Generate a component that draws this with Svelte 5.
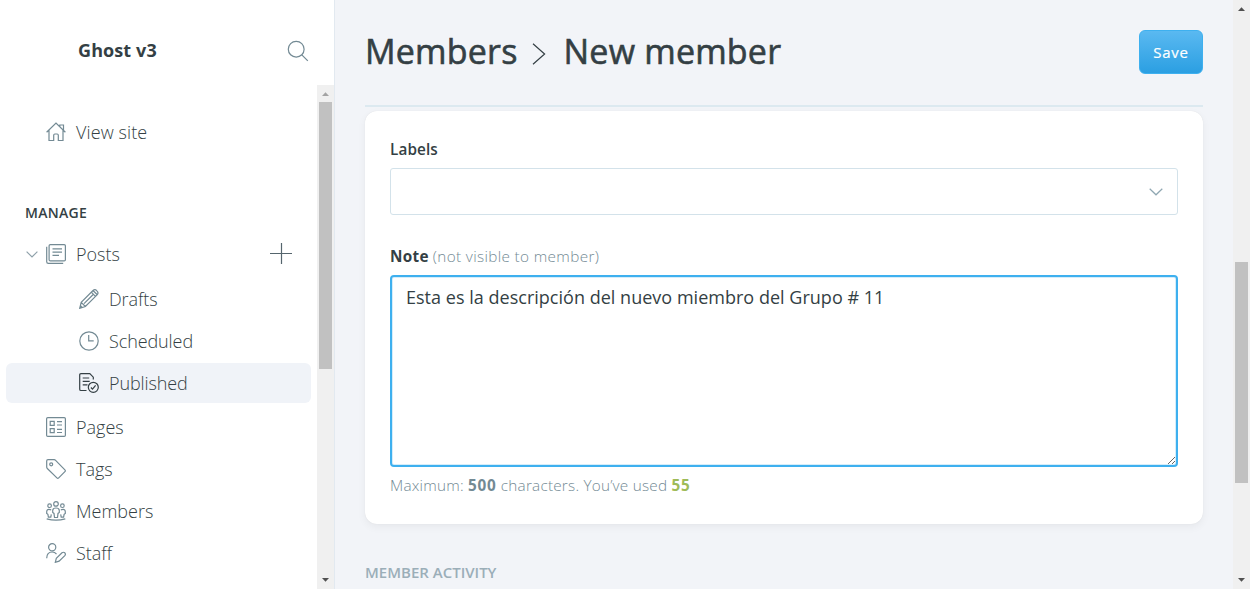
<script>
  const items = [
    { label: 'Posts', icon: 'posts', cls: 'posts', open: true },
    { label: 'Drafts', icon: 'pencil', cls: 'child drafts' },
    { label: 'Scheduled', icon: 'clock', cls: 'child scheduled' },
    { label: 'Published', icon: 'published', cls: 'child published active' },
    { label: 'Pages', icon: 'pages', cls: 'pages' },
    { label: 'Tags', icon: 'tag', cls: 'tags' },
    { label: 'Members', icon: 'members', cls: 'members' },
    { label: 'Staff', icon: 'staff', cls: 'staff' }
  ];
  let note = $state('Esta es la descripción del nuevo miembro del Grupo # 11');
</script>

{#snippet icon(name)}
  <svg class="icon" viewBox="0 0 20 20" width="20" height="20">
    {#if name === 'home'}
      <path d="M.6 10.2 10 1l9.4 9.2M3 8.3V18.5h4.7v-5.2q0-1.3 1.2-1.3h2.2q1.2 0 1.2 1.3v5.2H17V8.3M13.8 4.5V3h3.7v5.2" />
    {:else if name === 'posts'}
      <rect x="3.1" y=".6" width="16.3" height="16.3" rx="1.2" />
      <path d="M.7 2.7v15q0 1.7 1.7 1.7h14.8M6.5 4.8H16M6.5 8.1H16M6.5 11.4H13" />
    {:else if name === 'pencil'}
      <path d="m.7 19.3 1.5-6L14 1.5q2-1.7 3.9.3 2 2 .4 3.9L6.4 17.5zM2.2 13.3l4.2 4.2M12.3 3.2l4.4 4.4M14 1.5l4.3 4.2M5 14.7 14.2 5.5M1.5 16.7l1.6 1.6" />
    {:else if name === 'clock'}
      <circle cx="10" cy="10" r="9.2" /><path d="M9.7 4.1v5.8h5" />
    {:else if name === 'published'}
      <path d="M7.5 17.5H2q-1.3 0-1.3-1.3V2Q.7.7 2 .7h8.8l3.5 3.5v2.3M3.7 5h6.5M3.7 8.4h7M3.7 11.8h4.8" />
      <circle cx="14.3" cy="14.3" r="5" /><path d="m11.9 14.5 1.6 1.6 3.1-3.8" />
    {:else if name === 'pages'}
      <rect x=".6" y=".6" width="18.8" height="18.8" rx="1.2" />
      <path d="M4.2 4.4h4v4h-4zM4.2 11.7h4v4h-4zM11 4.7h5M11 8h5M11 12.3h5M11 15.5h5" />
    {:else if name === 'tag'}
      <path d="M.7 2q0-1.3 1.3-1.3h6.2q.8 0 1.4.6l9.3 9.5q.9.9 0 1.8l-6.2 6.2q-.9.9-1.8 0L1.3 9.5q-.6-.6-.6-1.4z" /><circle cx="5.2" cy="5.3" r="1.5" />
    {:else if name === 'members'}
      <circle cx="10" cy="2.9" r="2.3" /><circle cx="3.6" cy="4.7" r="1.8" /><circle cx="16.4" cy="4.7" r="1.8" />
      <path d="M8.5 16.5 8 12.4l-1.3-1V9.5q0-2.5 3.3-2.5t3.3 2.5v1.9l-1.3 1-.5 4.1zM5.2 8.8Q.7 7.5.7 10.7v1.7l1.2 1 .5 2.7h2.4l.5-2.7M14.8 8.8q4.5-1.3 4.5 1.9v1.7l-1.2 1-.5 2.7h-2.4l-.5-2.7M.7 17.8q9.3 2.7 18.6 0" />
    {:else if name === 'staff'}
      <circle cx="6.2" cy="4.3" r="3.6" />
      <path d="M.7 15.2Q.8 9 6.2 9q2.7 0 4.3 2.1M9.3 19.3l1-3.9 5.7-5.6q1.5-1.1 2.8 0 1.2 1.5 0 2.9l-5.7 5.5z" />
    {/if}
  </svg>
{/snippet}

{#snippet scrollbar(kind)}
  <div class="scrollbar {kind}" aria-hidden="true">
    <svg width="9" height="4" viewBox="0 0 9 4"><path d="M1 4 4.5.2 8 4z" /></svg>
    <div class="track"><div class="thumb"></div></div>
    <svg width="9" height="4" viewBox="0 0 9 4"><path d="M1 0 4.5 3.8 8 0z" /></svg>
  </div>
{/snippet}

<div class="app">
  <aside>
    <header class="brand">
      <strong>Ghost v3</strong>
      <svg class="search" width="22" height="22" viewBox="0 0 22 22"><circle cx="9.2" cy="9.2" r="7.9" /><path d="m14.8 14.8 6 6" /></svg>
    </header>
    <div class="scroller">
      <nav>
        <a class="row view" href="#site">{@render icon('home')}<span>View site</span></a>
        <h2>Manage</h2>
        {#each items as item}
          <a class="row {item.cls}" href="#{item.icon}">
            {#if item.open}<svg class="caret" width="12" height="7" viewBox="0 0 12 7"><path d="m.6.6 5.4 5.3L11.4.6" /></svg>{/if}
            {@render icon(item.icon)}<span>{item.label}</span>
            {#if item.open}<svg class="plus" width="22" height="22" viewBox="0 0 22 22"><path d="M11.5 0v21M0 10.5h22" /></svg>{/if}
          </a>
        {/each}
      </nav>
      {@render scrollbar('side')}
    </div>
  </aside>

  <main>
    <header class="top">
      <h1><span class="crumb">Members</span><svg width="14" height="22" viewBox="0 0 14 22"><path d="m1 .8 11.6 10.2L1 21.2" /></svg><span class="current">New member</span></h1>
      <button>Save</button>
    </header>
    <section class="card">
      <div class="label labels"><b>Labels</b></div>
      <div class="select"><svg width="14" height="8" viewBox="0 0 14 8"><path d="m.7.7 6.3 6.1L13.3.7" /></svg></div>
      <div class="label note"><b>Note</b> <span>(not visible to member)</span></div>
      <textarea bind:value={note} spellcheck="false"></textarea>
      <p>Maximum: <b>500</b> characters. You’ve used <b class="used">{note.length}</b></p>
    </section>
    <h3>Member activity</h3>
  </main>
  {@render scrollbar('page')}
</div>

<style>
  :global(body) { margin: 0; overflow: hidden; }
  * { box-sizing: border-box; }
  .app { display: flex; width: 1250px; height: 589px; overflow: hidden; background: #f2f4f8; color: #343f44; font-family: "Open Sans", "Noto Sans", sans-serif; }
  svg { display: block; flex: none; fill: none; stroke-width: 1.2; }
  aside { width: 335px; flex: none; display: flex; flex-direction: column; background: #fff; border-right: 1px solid #e2e9f0; }
  .brand { height: 85px; flex: none; display: flex; align-items: center; justify-content: space-between; padding: 17px 25px 0 78px; font-size: 18px; letter-spacing: .1px; }
  .brand strong { padding-bottom: 2px; }
  .search { stroke: #738a94; }
  .scroller { display: flex; flex: 1; min-height: 0; }
  nav { flex: 1; overflow: hidden; padding: 27px 6px 0; }
  .row { height: 40px; margin-bottom: 2px; display: flex; align-items: center; padding-left: 40px; color: #343f44; text-decoration: none; font-size: 18px; font-weight: 300; border-radius: 6px; }
  .row span { margin-left: 10px; }
  .view { letter-spacing: .1px; }
  .icon { stroke: #738a94; }
  .child { padding-left: 73px; letter-spacing: -.1px; }
  .active { background: #f0f3f8; }
  .active .icon { stroke: #343f44; }
  .posts { padding-left: 20px; padding-right: 19px; margin-bottom: 5px; }
  .published { margin-bottom: 4px; }
  .caret { margin-right: 8px; stroke: #8fa1aa; }
  .plus { margin-left: auto; stroke: #55656d; }
  h2 { margin: 51px 0 11px 19px; font-size: 14px; line-height: 20px; font-weight: 600; text-transform: uppercase; letter-spacing: .3px; }
  .scrollbar { width: 17px; flex: none; display: flex; flex-direction: column; align-items: center; background: #f0f0f0; padding: 7px 0; }
  .scrollbar svg { fill: #505050; }
  .track { flex: 1; width: 13px; margin: 6px 0; }
  .thumb { background: #c1c1c1; }
  .side .thumb { height: 267px; }
  .side svg:first-child { fill: #a3a3a3; }
  .page .thumb { margin-top: 245px; height: 221px; }
  main { flex: 1; padding: 0 30px; overflow: hidden; }
  .top { height: 107px; display: flex; align-items: flex-start; justify-content: space-between; border-bottom: 2px solid #dce9f0; }
  h1 { margin: 28px 0 0; height: 46px; display: flex; align-items: center; font-size: 34px; line-height: 46px; font-weight: 500; letter-spacing: .2px; -webkit-text-stroke: .6px #343f44; }
  h1 svg { margin: 5px 18px 0 14px; stroke: #343f44; }
  button { margin: 30px 0 0; width: 64px; height: 44px; border: 1px solid #3eb0ef; border-radius: 6px; background: linear-gradient(#5ab9f1, #2b9fe2); color: #fff; font: 500 15px "Open Sans", sans-serif; letter-spacing: .8px; -webkit-text-stroke: .2px #fff; padding: 0; }
  .card { margin-top: 4px; height: 413px; background: #fff; border-radius: 12px; padding: 28px 25px 0; box-shadow: 0 0 1px rgba(0,0,0,.1), 0 3px 8px rgba(0,0,0,.05); }
  .label { height: 20px; line-height: 20px; font-size: 15.3px; white-space: pre; }
  .label b { font-weight: 600; }
  .label span { font-weight: 300; letter-spacing: .35px; color: #738a94; }
  .select { margin-top: 9px; height: 47px; border: 1px solid #d3e2ea; border-radius: 3px; display: flex; align-items: center; justify-content: flex-end; padding-right: 14px; }
  .select svg { stroke: #8fa7b2; }
  .labels { letter-spacing: .1px; }
  .note { margin-top: 31px; }
  .note b { font-weight: 700; letter-spacing: .3px; }
  textarea { display: block; width: 100%; height: 192px; margin: 9px 0 0; border: 2px solid #3eb0ef; border-radius: 4px; box-shadow: inset 0 0 0 1px #d5edfa; padding: 8px 14px; font: 400 18px/24px "Open Sans", sans-serif; letter-spacing: .02px; color: #343f44; outline: 0; resize: vertical; }
  p { margin: 8px 0 0; font-size: 15.3px; line-height: 20px; font-weight: 300; letter-spacing: .22px; color: #738a94; white-space: pre; }
  p b { font-weight: 700; letter-spacing: .8px; }
  p .used { color: #9fbb58; }
  h3 { margin: 38px 0 0; font-size: 15px; line-height: 20px; font-weight: 600; color: #9baeb8; text-transform: uppercase; }
</style>
